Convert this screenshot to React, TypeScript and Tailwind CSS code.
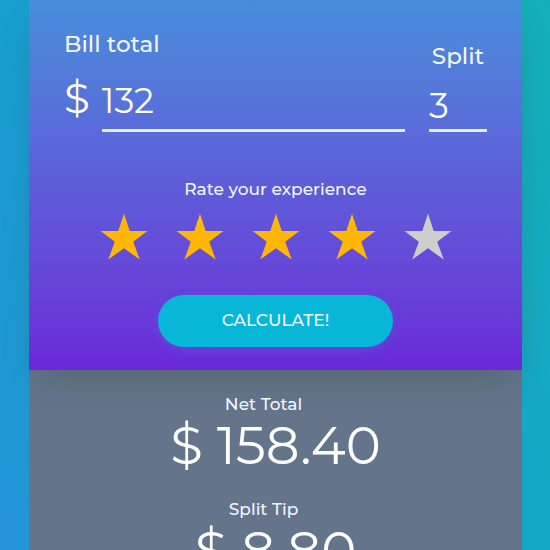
import { useState } from "react";

const ratings = [1, 2, 3, 4, 5];

function Star({ filled }: { filled: boolean }) {
  return (
    <svg
      viewBox="0 0 48 46"
      className={`h-[47px] w-12 ${filled ? "fill-[#ffb703]" : "fill-[#cecfcd]"}`}
      aria-hidden="true"
    >
      <path d="M24 0 L29.7 17.4 H47.5 L33.2 28.2 L39.7 46 L24 34.8 L8.3 46 L14.8 28.2 L0.5 17.4 H18.3 Z" />
    </svg>
  );
}

function Result({ label, value }: { label: string; value: string }) {
  return (
    <div className="flex h-[105px] flex-col items-center">
      <h2 className="pr-6 text-[17px] leading-5">{label}</h2>
      <p className="text-[53px] leading-[62px] font-normal text-white">$ {value}</p>
    </div>
  );
}

export default function App() {
  const [bill, setBill] = useState("132");
  const [split, setSplit] = useState("3");
  const [rating, setRating] = useState(4);
  const [shown, setShown] = useState({ net: "158.40", tip: "8.80" });

  function calculate(event: React.FormEvent) {
    event.preventDefault();
    const total = Number(bill) || 0;
    const tip = total * rating * 0.05;
    setShown({
      net: (total + tip).toFixed(2),
      tip: (tip / (Number(split) || 1)).toFixed(2),
    });
  }

  return (
    <div className="h-screen overflow-hidden bg-[linear-gradient(240deg,#14b0ba,#179ed0_65%,#2394d6)] px-7 pl-[29px] font-['Montserrat','Inter','Liberation_Sans',sans-serif] font-medium text-[#f3f6ff]">
      <main className="min-h-full bg-[#64748b]">
        <form
          onSubmit={calculate}
          className="bg-linear-to-b from-[#468edb] via-[#5e5cd8] to-[#6b27d9] px-[35px] pt-8 pb-[23px] shadow-[0_16px_32px_-12px_rgba(60,75,60,0.45)]"
        >
          <div className="flex items-end gap-6">
            <div className="min-w-0 flex-1">
              <label htmlFor="bill" className="block text-[23px] leading-6">
                Bill total
              </label>
              <div className="mt-5 flex gap-3">
                <span className="text-[42px] leading-[44px] font-normal text-white">$</span>
                <input
                  id="bill"
                  value={bill}
                  onChange={(e) => setBill(e.target.value)}
                  inputMode="decimal"
                  className="h-14 w-full min-w-0 border-b-[3px] border-[#e9eafa] bg-transparent pb-1 text-[35px] font-normal text-white outline-none"
                />
              </div>
            </div>
            <div className="w-[58px]">
              <label htmlFor="split" className="block text-center text-[23px] leading-6">
                Split
              </label>
              <input
                id="split"
                value={split}
                onChange={(e) => setSplit(e.target.value)}
                inputMode="numeric"
                className="mt-4 block h-12 w-full border-b-[3px] border-[#e9eafa] bg-transparent text-[35px] font-normal text-white outline-none"
              />
            </div>
          </div>

          <fieldset className="mt-[47px]">
            <legend className="mx-auto text-[17px] leading-5">Rate your experience</legend>
            <div className="mt-3.5 flex justify-center gap-7">
              {ratings.map((n) => (
                <label key={n} className="relative cursor-pointer">
                  <input
                    type="radio"
                    name="rating"
                    value={n}
                    checked={rating === n}
                    onChange={() => setRating(n)}
                    aria-label={`${n} stars`}
                    className="sr-only"
                  />
                  <Star filled={n <= rating} />
                </label>
              ))}
            </div>
          </fieldset>

          <button
            type="submit"
            className="mx-auto mt-[35px] block h-[52px] w-[235px] cursor-pointer rounded-full bg-[#08b6d7] text-[17px] shadow-[0_4px_10px_rgba(90,90,220,0.5)]"
          >
            CALCULATE!
          </button>
        </form>

        <section className="pt-6">
          <Result label="Net Total" value={shown.net} />
          <Result label="Split Tip" value={shown.tip} />
        </section>
      </main>
    </div>
  );
}
